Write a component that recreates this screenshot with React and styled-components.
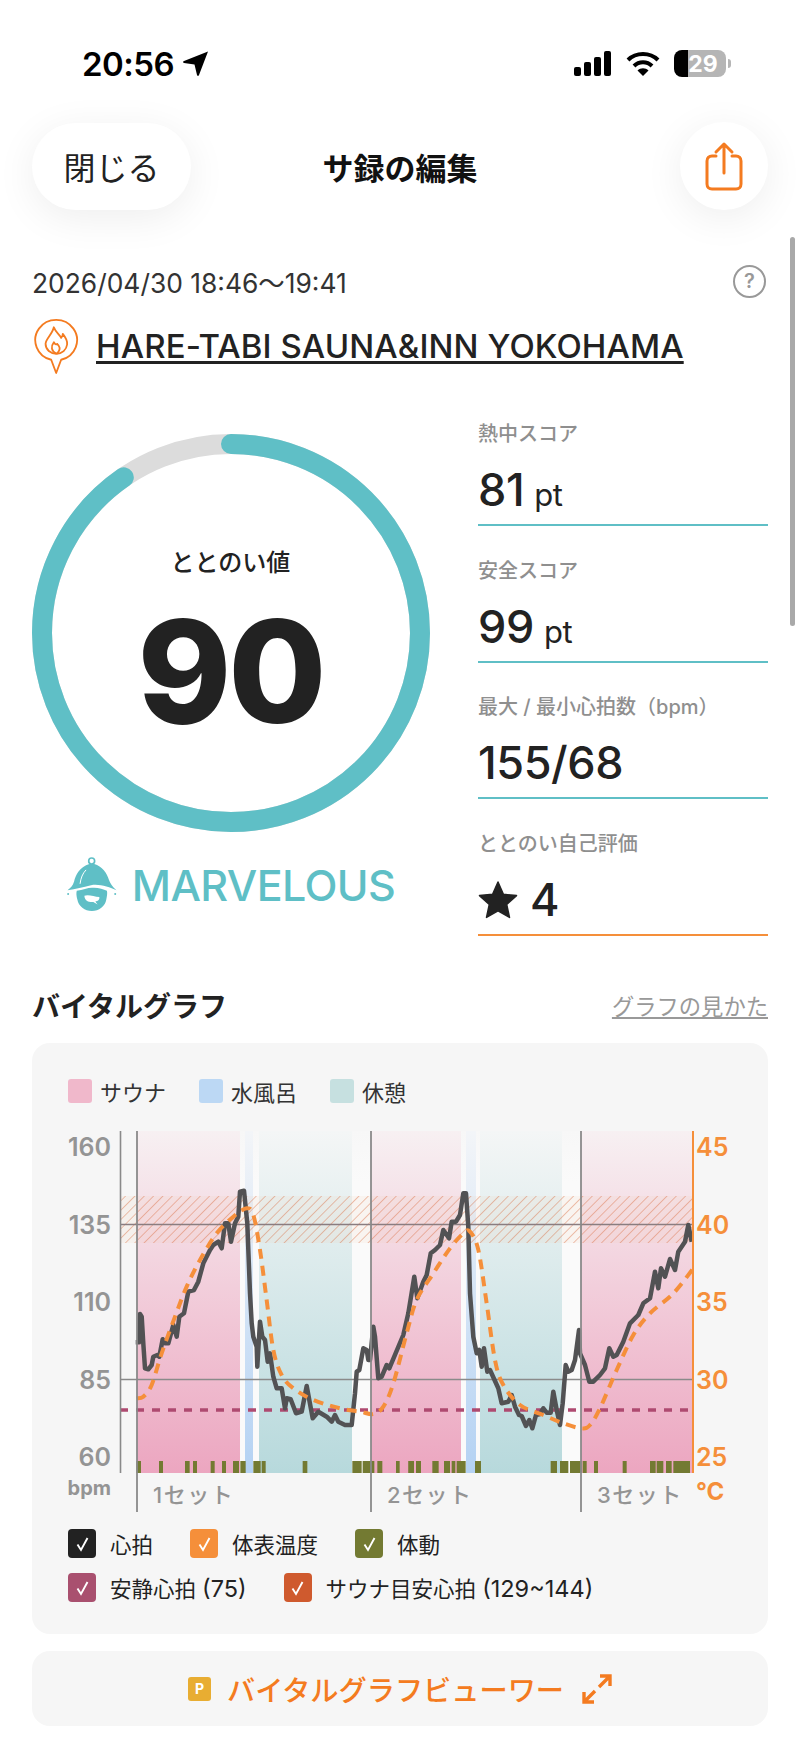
import React from 'react';
import styled, { createGlobalStyle } from 'styled-components';

const Global = createGlobalStyle`
  html, body { margin: 0; padding: 0; background: #fff; }
  body { font-family: Inter, "Noto Sans CJK JP", sans-serif; color: #222; width: 800px; height: 1739px; overflow: hidden; }
  * { box-sizing: border-box; }
`;
const Page = styled.div`width: 800px; height: 1739px; position: relative; overflow: hidden; background: #fff;`;
const Scroll = styled.div`position: absolute; right: 5px; top: 237px; width: 5px; height: 389px; border-radius: 3px; background: #a9a9a9;`;
const StatusBar = styled.div`display: flex; align-items: center; justify-content: space-between; height: 122px; padding: 5px 70px 0 82px;`;
const Time = styled.div`display: flex; align-items: center; gap: 8px; font: 600 33px Inter, sans-serif; color: #000; letter-spacing: -0.5px;`;
const StatusIcons = styled.div`display: flex; align-items: center; gap: 14px;`;
const Battery = styled.div`position: relative; width: 52px; height: 27px; border-radius: 8px; background: linear-gradient(90deg, #000 27%, #b5b5b5 27%); display: flex; align-items: center; justify-content: center; font: 700 23px Inter, sans-serif; color: #fff; padding-left: 6px; margin-right: 4px;`;
const Nub = styled.div`position: absolute; right: -5px; top: 9px; width: 3px; height: 9px; border-radius: 0 3px 3px 0; background: #b5b5b5;`;
const Header = styled.div`display: grid; grid-template-columns: 1fr auto 1fr; align-items: center; padding: 0 32px; height: 88px; margin-bottom: 53px;`;
const Pill = styled.div`justify-self: start; width: 159px; height: 87px; border-radius: 44px; background: #fff; box-shadow: 0 8px 40px rgba(0,0,0,.07); display: flex; align-items: center; justify-content: center; font-size: 32px;`;
const Title = styled.div`font-size: 31px; font-weight: 700; color: #111;`;
const Round = styled.div`justify-self: end; width: 88px; height: 88px; border-radius: 50%; background: #fff; box-shadow: 0 8px 40px rgba(0,0,0,.07); display: flex; align-items: center; justify-content: center;`;
const DateRow = styled.div`display: flex; align-items: center; justify-content: space-between; padding: 0 34px 0 32px; height: 36px;`;
const DateText = styled.div`font-size: 26.4px; color: #333;`;
const Help = styled.div`width: 33px; height: 33px; border: 2.5px solid #999; border-radius: 50%; color: #999; display: flex; align-items: center; justify-content: center; font-size: 20px; font-weight: 600;`;
const PlaceRow = styled.div`display: flex; align-items: center; gap: 16px; padding: 0 32px 0 33px; margin-top: 19px;`;
const PlaceName = styled.div`font-size: 33px; font-weight: 500; text-decoration: underline; text-decoration-thickness: 3px; text-underline-offset: 3px; color: #222; letter-spacing: 0.1px; margin-top: -2px;`;
const Summary = styled.div`display: grid; grid-template-columns: 397px 290px; column-gap: 49px; padding: 0 32px; margin-top: 59px;`;
const RingCol = styled.div`display: flex; flex-direction: column; align-items: center;`;
const RingBox = styled.div`position: relative; width: 398px; height: 398px;`;
const RingCenter = styled.div`position: absolute; inset: 0; display: flex; flex-direction: column; align-items: center; padding-top: 113px;`;
const RingLabel = styled.div`font-size: 24px; font-weight: 500; line-height: 32px;`;
const RingValue = styled.div`font-size: 142px; font-weight: 800; line-height: 150px; color: #222; letter-spacing: -3px; margin-top: 17px;`;
const Rank = styled.div`display: flex; align-items: center; gap: 14px; margin-top: 24px;`;
const RankText = styled.div`font-size: 43px; font-weight: 500; color: #5fbfc6; letter-spacing: -0.6px;`;
const Stats = styled.div`display: flex; flex-direction: column; margin-top: -14px;`;
const Stat = styled.div`height: 106px; border-bottom: 2px solid ${p => p.$accent}; margin-bottom: 30.5px; display: flex; flex-direction: column;`;
const StatLabel = styled.div`font-size: 20px; font-weight: 500; color: #8f8f8f; line-height: 28px;`;
const StatValue = styled.div`font-size: 45px; font-weight: 500; line-height: 60px; margin-top: 12px; display: flex; align-items: baseline; gap: 10px; color: #222; letter-spacing: -0.4px;`;
const StarValue = styled(StatValue)`align-items: center; gap: 12px;`;
const Unit = styled.span`font-size: 31px; font-weight: 400;`;
const SectionHead = styled.div`display: flex; align-items: center; justify-content: space-between; padding: 0 32px; margin-top: 19px; height: 40px;`;
const SectionTitle = styled.div`font-size: 28px; font-weight: 700;`;
const SectionLink = styled.div`font-size: 22.3px; color: #999; text-decoration: underline;`;
const Card = styled.div`margin: 18px 32px 0; background: #f6f6f6; border-radius: 18px; height: 591px; padding: 34px 36px 0;`;
const Legend = styled.div`display: flex; align-items: center; height: 28px;`;
const LegendItem = styled.div`display: flex; align-items: center; gap: 8px; font-size: 22px; color: #333; margin-right: 33px;`;
const Swatch = styled.div`width: 24px; height: 24px; border-radius: 3px; background: ${p => p.$c};`;
const ChartSvg = styled.svg`display: block; margin: 20px 0 0 -68px; font-family: Inter, "Noto Sans CJK JP", sans-serif;`;
const Checks = styled.div`display: flex; flex-direction: column; gap: 13px; margin-top: 8px;`;
const CheckRow = styled.div`display: flex; gap: 37px;`;
const Check = styled.div`display: flex; align-items: center; gap: 14px; font-size: 21.5px; color: #222;`;
const Latin = styled.span`font-size: 23.5px;`;
const Box = styled.div`width: 28px; height: 29px; border-radius: 4px; background: ${p => p.$c}; display: flex; align-items: center; justify-content: center;`;
const Viewer = styled.div`margin: 17px 32px 0; height: 75px; border-radius: 18px; background: #f6f6f6; display: flex; align-items: center; justify-content: center; gap: 16px; color: #f47b20;`;
const PBadge = styled.div`width: 23px; height: 24px; border-radius: 3px; background: #e8ad32; color: #fff; display: flex; align-items: center; justify-content: center; font-size: 14px; font-weight: 700;`;
const ViewerText = styled.div`font-size: 28.2px; font-weight: 500; margin-right: 2px;`;

const L = a => a.map(([x, y]) => [x / 3 + 40, y / 3 + 1060]);
const R = a => a.map(([x, y]) => [x / 3 + 400, y / 3 + 1060]);
const hr = [
  ...L([[287,847],[297,847],[300,762],[305,770],[310,850],[315,925],[325,928],[335,915],[340,890],[352,885],[358,890],[368,838],[375,850],[385,850],[400,795],[410,830],[418,770],[432,760],[445,695],[462,690],[475,665],[490,610],[510,570],[520,555],[535,545],[545,565],[555,490],[565,490],[573,545],[585,490],[595,470],[600,395],[612,392],[622,490],[630,700],[635,790],[640,830],[650,860],[652,920],[660,785],[667,830],[675,840],[683,905],[690,880],[700,950],[710,985],[725,985],[735,1045],[740,1015],[752,1018],[768,1060],[785,1055],[800,978],[818,1075],[835,1055],[860,1070],[875,1085],[885,1065],[895,1085],[915,1095],[935,1095],[945,1000],[950,935],[958,930],[970,865],[980,870],[985,900],[990,900],[1000,800],[1005,830],[1015,955],[1025,950],[1040,915],[1048,925]]),
  ...R([[10,825],[25,760],[43,650],[52,715],[70,665],[80,645],[92,580],[105,570],[120,555],[130,510],[147,535],[155,485],[168,485],[180,465],[190,400],[198,400],[205,500],[210,700],[220,830],[230,880],[238,870],[245,920],[252,865],[262,935],[270,930],[295,985],[305,1030],[325,1025],[335,1005],[345,1040],[357,1065],[365,1068],[378,1098],[388,1080],[397,1105],[408,1065],[420,1062],[430,1045],[440,1058],[452,1058],[460,995],[470,1050],[480,1095],[488,1030],[497,915],[505,935],[515,930],[525,900],[537,810],[540,880],[555,915],[568,965],[580,965],[600,945],[615,925],[628,865],[640,890],[650,885],[670,845],[690,790],[715,765],[730,730],[750,715],[765,635],[775,685],[783,625],[795,650],[810,597],[825,630],[835,575],[855,545],[865,495],[875,545]]),
];
const temp = [
  ...L([[290,1015],[310,1010],[335,975],[365,880],[405,770],[440,680],[480,600],[530,520],[580,470],[620,445],[640,465],[660,570],[680,720],[700,870],[725,945],[760,985],[820,1020],[900,1045],[960,1055],[1000,1062],[1030,1040],[1060,970]]),
  ...R([[20,820],[50,720],[100,640],[150,565],[190,520],[210,515],[235,570],[260,730],[285,900],[310,975],[360,1035],[430,1065],[490,1090],[545,1105],[570,1095],[600,1045],[650,930],[700,825],[750,760],[820,700],[880,625]]),
];
const OX = 0, OY = 1125;
const smooth = pts => {
  const p = pts.map(([x, y]) => [x - OX, y - OY]);
  let d = `M${p[0][0]} ${p[0][1]}`;
  for (let i = 0; i < p.length - 1; i++) {
    const a = p[i - 1] || p[i], b = p[i], c = p[i + 1], e = p[i + 2] || c;
    d += ` C${b[0] + (c[0] - a[0]) / 6} ${b[1] + (c[1] - a[1]) / 6} ${c[0] - (e[0] - b[0]) / 6} ${c[1] - (e[1] - b[1]) / 6} ${c[0]} ${c[1]}`;
  }
  return d;
};
const line = pts => 'M' + pts.map(([x, y]) => `${(x - OX).toFixed(1)} ${(y - OY).toFixed(1)}`).join(' L');
const ticks = [
  ...[[289,303],[357,369],[435,449],[459,471],[512,524],[546,558],[579,597],[601,617],[640,662],[665,677],[788,802],[937,965],[968,1003],[1012,1027],[1068,1079],[1106,1122],[1128,1140]].map(([a, b]) => [a / 3 + 40, b / 3 + 40]),
  ...[[25,42],[48,63],[97,116],[132,150],[155,166],[170,197],[225,243],[452,471],[480,505],[510,545],[548,560],[582,594],[668,680],[750,767],[770,790],[798,815],[820,870]].map(([a, b]) => [a / 3 + 400, b / 3 + 400]),
];
const T = 1131 - OY, B = 1473 - OY;
const bands = [
  [137, 240, 's'], [245, 253, 'w'], [259, 352, 'r'],
  [371, 461, 's'], [466, 476, 'w'], [480, 562, 'r'],
  [581, 692, 's'],
];
const gaps = [[240, 245], [253, 259], [352, 371], [461, 466], [476, 480], [562, 581]];
const yLeft = [[160, 1147], [135, 1225], [110, 1302], [85, 1380], [60, 1457]];
const yRight = [[45, 1147], [40, 1225], [35, 1302], [30, 1380], [25, 1457]];

function Chart() {
  return (
    <ChartSvg width="800" height="395" viewBox="0 0 800 395">
      <defs>
        <linearGradient id="gs" x1="0" y1="0" x2="0" y2="1"><stop offset="0" stopColor="#f7f0f2" /><stop offset="1" stopColor="#eca6c0" /></linearGradient>
        <linearGradient id="gw" x1="0" y1="0" x2="0" y2="1"><stop offset="0" stopColor="#f3f5f8" /><stop offset="1" stopColor="#b4d2f3" /></linearGradient>
        <linearGradient id="gr" x1="0" y1="0" x2="0" y2="1"><stop offset="0" stopColor="#f4f6f6" /><stop offset="1" stopColor="#b7d9dc" /></linearGradient>
        <linearGradient id="gg" x1="0" y1="0" x2="0" y2="1"><stop offset="0" stopColor="#f7f7f7" /><stop offset=".15" stopColor="#fafafa" /><stop offset="1" stopColor="#fafafa" /></linearGradient>
        <pattern id="hatch" width="6.6" height="6.6" patternUnits="userSpaceOnUse" patternTransform="rotate(45)">
          <rect width="6.6" height="6.6" fill="#f3c5a8" fillOpacity=".12" />
          <line x1="0" y1="0" x2="0" y2="6.6" stroke="#d9673a" strokeWidth="1.3" strokeOpacity=".6" />
        </pattern>
      </defs>
      {gaps.map(([a, b]) => <rect key={a} x={a} y={T} width={b - a} height={B - T} fill="url(#gg)" />)}
      {bands.map(([a, b, k]) => <rect key={a} x={a} y={T} width={b - a} height={B - T} fill={`url(#g${k})`} />)}
      <rect x="120" y={1196 - OY} width="573" height="47" fill="url(#hatch)" />
      <line x1="120" x2="693" y1={1224.5 - OY} y2={1224.5 - OY} stroke="#8a7d80" strokeWidth="1.5" />
      <line x1="120" x2="693" y1={1379.5 - OY} y2={1379.5 - OY} stroke="#8a8a8a" strokeWidth="1.5" />
      <line x1="120" x2="690" y1={1410 - OY} y2={1410 - OY} stroke="#ae4a70" strokeWidth="3.4" strokeDasharray="8 8" />
      {ticks.map(([a, b]) => <rect key={a} x={a} y={1461 - OY} width={b - a} height="12" fill="#737a32" />)}
      <path d={line(hr)} fill="none" stroke="#525254" strokeWidth="4.5" strokeLinejoin="round" />
      <path d={smooth(temp)} fill="none" stroke="#f58f3a" strokeWidth="4" strokeDasharray="10 7" />
      <line x1="120.5" x2="120.5" y1={T} y2={B} stroke="#8a8a8a" strokeWidth="1.6" />
      {[137, 371, 581].map(x => <line key={x} x1={x} x2={x} y1={T} y2={1512 - OY} stroke="#8a8a8a" strokeWidth="1.8" />)}
      <line x1="693" x2="693" y1={T} y2={B} stroke="#f58f3a" strokeWidth="2" />
      {yLeft.map(([t, y]) => <text key={t} x="111" y={y - OY + 9} textAnchor="end" fontSize="25" fontWeight="600" fill="#949494">{t}</text>)}
      <text x="111" y={1489 - OY + 6} textAnchor="end" fontSize="20" fontWeight="700" fill="#949494">bpm</text>
      {yRight.map(([t, y]) => <text key={t} x="696" y={y - OY + 9} fontSize="25" fontWeight="600" fill="#f58f3a">{t}</text>)}
      <text x="696" y={1491 - OY + 9} fontSize="24" fontWeight="700" fill="#f58f3a">°C</text>
      {[[153, '1セット'], [387, '2セット'], [597, '3セット']].map(([x, t]) => <text key={x} x={x} y={1495 - OY + 8} fontSize="22" fontWeight="500" letterSpacing="1.5" fill="#949494">{t}</text>)}
    </ChartSvg>
  );
}

const Tick = () => <svg width="15" height="16" viewBox="0 0 15 16"><path d="M2.5 8.5 L6 14 L12.5 2" fill="none" stroke="#fff" strokeWidth="1.9" /></svg>;
const C = ({ c, children }) => <Check><Box $c={c}><Tick /></Box><span>{children}</span></Check>;

const Hat = () => (
  <svg width="52" height="57" viewBox="30 28 156 172">
    <circle cx="107" cy="43" r="9" fill="none" stroke="#5fbfc6" strokeWidth="5" />
    <path d="M100 52 C72 60 58 85 54 105 C50 118 43 125 34 131 C60 128 80 122 105 116 C130 111 160 122 182 131 C170 122 162 110 159 100 C154 80 138 58 115 52 Z" fill="#5fbfc6" />
    <path d="M72 112 C74 95 80 80 90 70" fill="none" stroke="#fff" strokeWidth="3" />
    <circle cx="36" cy="143" r="3" fill="#5fbfc6" />
    <circle cx="178" cy="143" r="3" fill="#5fbfc6" />
    <path d="M62 133 C80 131 95 124 108 124 C125 122 142 129 153 133 C155 140 153 150 151 160 A44 40 0 0 1 64 160 C61 150 60 140 62 133 Z" fill="#5fbfc6" />
    <path d="M85 148 C95 143 115 150 130 152 C132 160 125 165 118 165 L125 174 L112 167 C100 168 86 165 85 148 Z" fill="#fff" />
  </svg>
);
const Pin = () => (
  <svg width="47" height="57" viewBox="38 22 140 172" fill="none" stroke="#f47b20" strokeWidth="5.5" strokeLinejoin="round">
    <path d="M92 148 A63 61 0 1 1 122 148 L107 188 Z" />
    <path d="M100 50 C105 65 118 72 122 82 C126 77 127 74 127 70 C135 80 142 90 140 102 C138 118 125 130 108 130 C90 130 75 118 75 100 C75 85 95 72 100 50 Z" />
    <path d="M108 130 C92 122 90 108 100 95 C103 102 108 103 110 100 C115 105 125 115 108 130" />
  </svg>
);
const Star = () => <svg width="40" height="40" viewBox="0 0 40 40"><path d="M20 2 L25.4 14.2 L38.5 15.6 L28.7 24.4 L31.5 37.4 L20 30.8 L8.5 37.4 L11.3 24.4 L1.5 15.6 L14.6 14.2 Z" fill="#222" stroke="#222" strokeWidth="1.5" strokeLinejoin="round" /></svg>;

export default function App() {
  return (
    <Page>
      <Global />
      <Scroll />
      <StatusBar>
        <Time>20:56
          <svg width="27" height="27" viewBox="0 0 27 27"><path d="M26 1.5 L17 25 Q16 27 15 25 L12.5 14.5 L2 13 Q0 12 2 11 Z" fill="#000" /></svg>
        </Time>
        <StatusIcons>
          <svg width="38" height="26" viewBox="0 0 38 26" fill="#000">
            <rect x="0" y="16" width="7" height="9" rx="2" /><rect x="10" y="11" width="7" height="14" rx="2" /><rect x="20" y="6" width="7" height="19" rx="2" /><rect x="30" y="0" width="7" height="25" rx="2" />
          </svg>
          <svg width="34" height="26" viewBox="0 0 34 26" fill="none" stroke="#000" strokeWidth="4">
            <path d="M2 9 C10 1 24 1 32 9" /><path d="M8 15 C13 10 21 10 26 15" /><path d="M17 25 L11.5 19.5 C14.5 16.5 19.5 16.5 22.5 19.5 Z" fill="#000" stroke="none" />
          </svg>
          <Battery>29<Nub /></Battery>
        </StatusIcons>
      </StatusBar>
      <Header>
        <Pill>閉じる</Pill>
        <Title>サ録の編集</Title>
        <Round>
          <svg width="40" height="50" viewBox="0 0 40 50" fill="none" stroke="#f47b20" strokeWidth="3" strokeLinecap="round" strokeLinejoin="round">
            <path d="M20 32 V3 M12 11 L20 3 L28 11" />
            <path d="M12 15 H8 C5 15 3 17 3 20 V43 C3 46 5 48 8 48 H32 C35 48 37 46 37 43 V20 C37 17 35 15 32 15 H28" />
          </svg>
        </Round>
      </Header>
      <DateRow><DateText>2026/04/30 18:46～19:41</DateText><Help>?</Help></DateRow>
      <PlaceRow><Pin /><PlaceName>HARE-TABI SAUNA&amp;INN YOKOHAMA</PlaceName></PlaceRow>
      <Summary>
        <RingCol>
          <RingBox>
            <svg width="398" height="398" viewBox="0 0 398 398">
              <circle cx="199" cy="199" r="189" fill="none" stroke="#dcdcdc" strokeWidth="20" />
              <circle cx="199" cy="199" r="189" fill="none" stroke="#5fbfc6" strokeWidth="20" strokeLinecap="round" pathLength="100" strokeDasharray="90.4 100" transform="rotate(-90 199 199)" />
            </svg>
            <RingCenter><RingLabel>ととのい値</RingLabel><RingValue>90</RingValue></RingCenter>
          </RingBox>
          <Rank><Hat /><RankText>MARVELOUS</RankText></Rank>
        </RingCol>
        <Stats>
          <Stat $accent="#5fbfc6"><StatLabel>熱中スコア</StatLabel><StatValue>81<Unit>pt</Unit></StatValue></Stat>
          <Stat $accent="#5fbfc6"><StatLabel>安全スコア</StatLabel><StatValue>99<Unit>pt</Unit></StatValue></Stat>
          <Stat $accent="#5fbfc6"><StatLabel>最大 / 最小心拍数（bpm）</StatLabel><StatValue>155/68</StatValue></Stat>
          <Stat $accent="#f58f3a"><StatLabel>ととのい自己評価</StatLabel><StarValue><Star />4</StarValue></Stat>
        </Stats>
      </Summary>
      <SectionHead><SectionTitle>バイタルグラフ</SectionTitle><SectionLink>グラフの見かた</SectionLink></SectionHead>
      <Card>
        <Legend>
          <LegendItem><Swatch $c="#f0b8cb" />サウナ</LegendItem>
          <LegendItem><Swatch $c="#bcd8f4" />水風呂</LegendItem>
          <LegendItem><Swatch $c="#c6e0e0" />休憩</LegendItem>
        </Legend>
        <Chart />
        <Checks>
          <CheckRow><C c="#222">心拍</C><C c="#f58f3a">体表温度</C><C c="#737a32">体動</C></CheckRow>
          <CheckRow><C c="#a9506f">安静心拍 <Latin>(75)</Latin></C><C c="#cf5a2e">サウナ目安心拍 <Latin>(129~144)</Latin></C></CheckRow>
        </Checks>
      </Card>
      <Viewer>
        <PBadge>P</PBadge>
        <ViewerText>バイタルグラフビューワー</ViewerText>
        <svg width="30" height="30" viewBox="0 0 30 30" fill="none" stroke="#f47b20" strokeWidth="3.4"><path d="M18 2 H28 V12 M28 2 L17 13 M12 28 H2 V18 M2 28 L13 17" /></svg>
      </Viewer>
    </Page>
  );
}
